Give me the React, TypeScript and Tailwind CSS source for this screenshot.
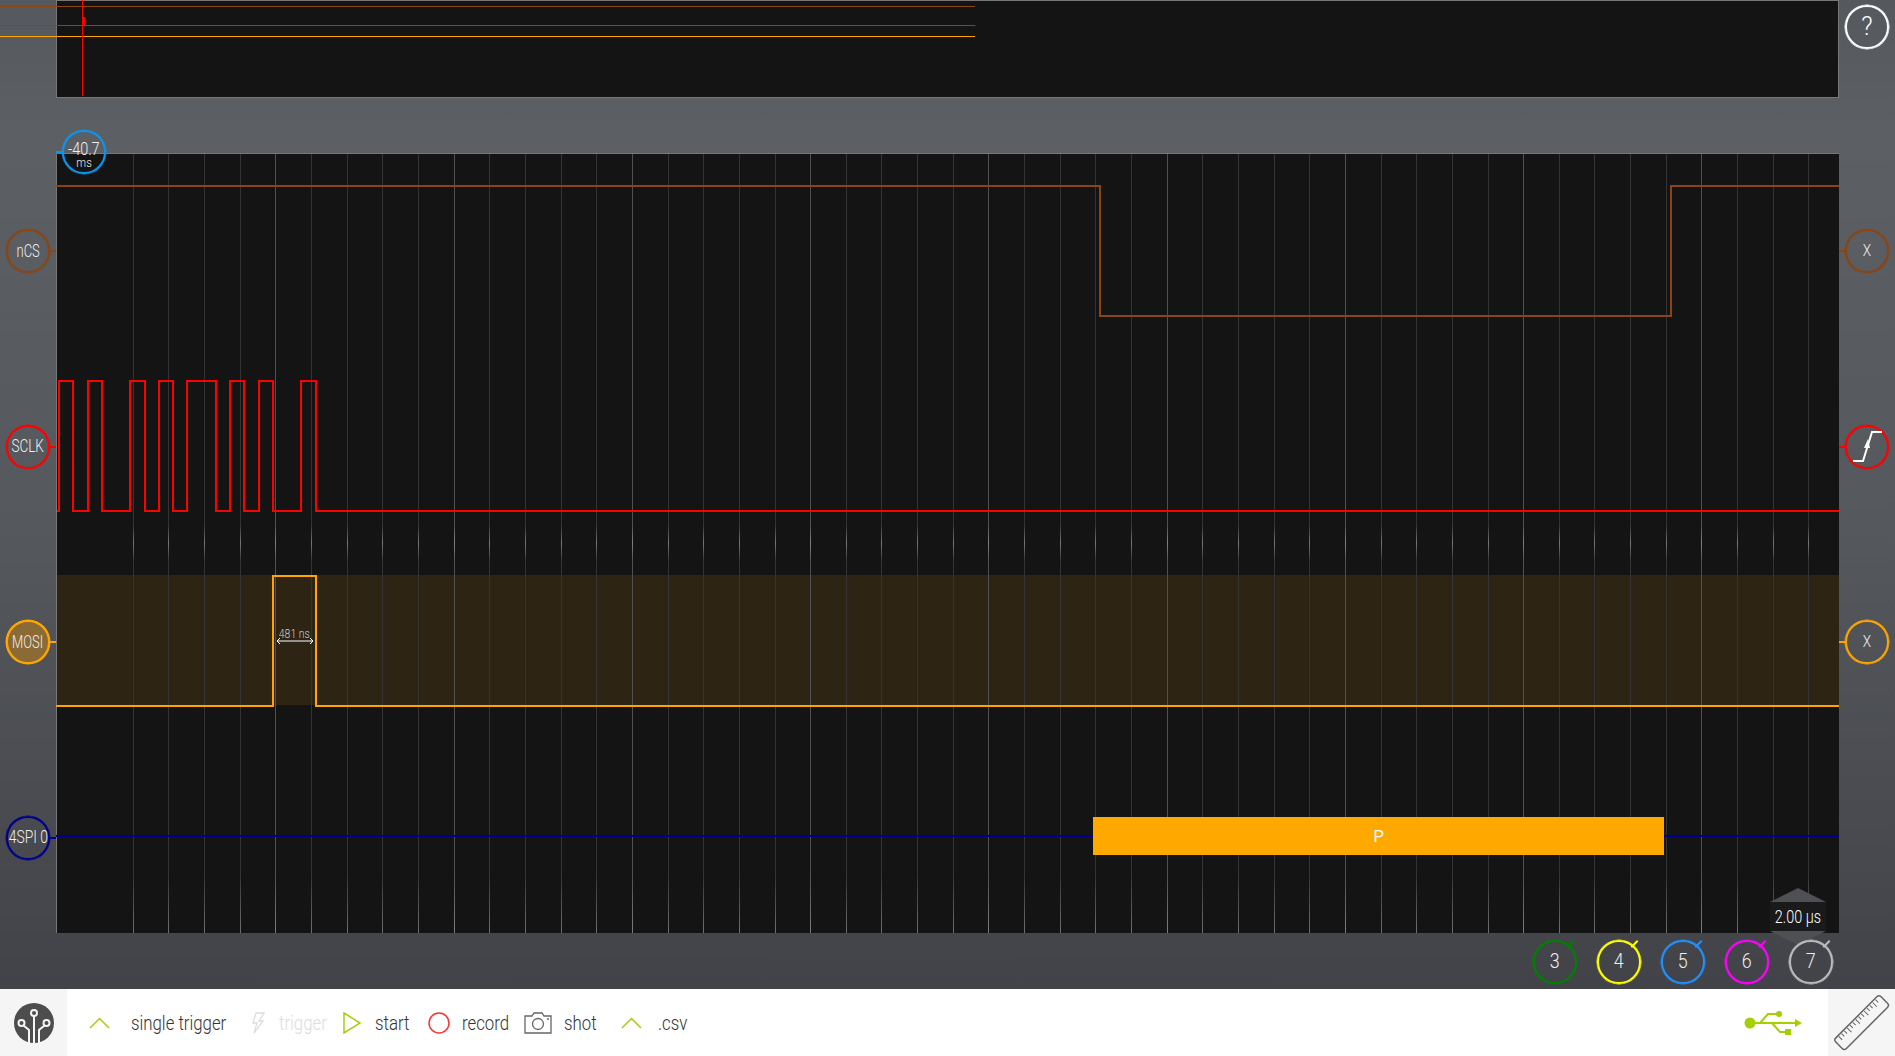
import type { ReactNode } from 'react';

const lines = Array.from({ length: 48 }, (_, i) => 133.3 + i * 35.65);

const channels = [
  { name: 'nCS', border: 'border-[#8b4513] shadow-[0_0_0_0.5px_#8b4513]', tick: 'bg-[#8b4513]', fill: '', right: 'X', scale: 'scale-x-[0.72]' },
  { name: 'SCLK', border: 'border-[#ff0000] shadow-[0_0_0_0.5px_#ff0000]', tick: 'bg-[#ff0000]', fill: '', right: 'edge', scale: 'scale-x-[0.75]' },
  { name: 'MOSI', border: 'border-[#ffa500] shadow-[0_0_0_0.5px_#ffa500]', tick: 'bg-[#ffa500]', fill: 'bg-[#8a6a35]', right: 'X', scale: 'scale-x-[0.72]' },
  { name: '4SPI 0', border: 'border-[#00008b] shadow-[0_0_0_0.5px_#00008b]', tick: 'bg-[#00008b]', fill: '', right: '', scale: 'scale-x-[0.77]' },
];

const channelButtons = [
  ['3', 'border-[#008000] shadow-[0_0_0_0.5px_#008000]', 'bg-[#008000]'],
  ['4', 'border-[#ffff00] shadow-[0_0_0_0.5px_#ffff00]', 'bg-[#ffff00]'],
  ['5', 'border-[#1e90ff] shadow-[0_0_0_0.5px_#1e90ff]', 'bg-[#1e90ff]'],
  ['6', 'border-[#ff00ff] shadow-[0_0_0_0.5px_#ff00ff]', 'bg-[#ff00ff]'],
  ['7', 'border-[#bbbbbb] shadow-[0_0_0_0.5px_#bbbbbb]', 'bg-[#bbbbbb]'],
];

function Waves() {
  return (
    <svg className="absolute inset-0 h-full w-full" viewBox="56 153 1783 780">
      <defs>
        <linearGradient id="midGlow" gradientUnits="userSpaceOnUse" x1="0" x2="0" y1="525" y2="561">
          <stop offset="0" stopColor="#aaa" stopOpacity="0" />
          <stop offset="0.5" stopColor="#aaa" stopOpacity="0.55" />
          <stop offset="1" stopColor="#aaa" stopOpacity="0" />
        </linearGradient>
        <linearGradient id="bottomGlow" gradientUnits="userSpaceOnUse" x1="0" x2="0" y1="875" y2="933">
          <stop offset="0" stopColor="#aaa" stopOpacity="0" />
          <stop offset="1" stopColor="#aaa" stopOpacity="0.5" />
        </linearGradient>
      </defs>
      <g shapeRendering="crispEdges">
        <rect x="56" y="575" width="1783" height="130" fill="#2e2413" />
        <rect x="56" y="153" width="1783" height="1" fill="#777" />
        <rect x="56" y="153" width="1" height="780" fill="#777" />
        {lines.map((x, i) => (
          <g key={x}>
            <line x1={x} x2={x} y1="154" y2="933" stroke={i % 5 === 4 ? '#505050' : '#343434'} strokeWidth="1" />
            <line x1={x} x2={x} y1="525" y2="561" stroke="url(#midGlow)" strokeWidth="1" />
            <line x1={x} x2={x} y1="875" y2="933" stroke="url(#bottomGlow)" strokeWidth="1" />
          </g>
        ))}
        <path d="M56 186H1100V316H1671V186H1839" fill="none" stroke="#8b4513" strokeWidth="2" />
        <path
          d="M57 511H59V381H73V511H88V381H102V511H130V381H145V511H159V381H173V511H187V381H216V511H230V381H244V511H259V381H273V511H301V381H316V511H1839"
          fill="none"
          stroke="#ff0000"
          strokeWidth="2"
        />
        <path d="M56 706H273V576H316V706H1839" fill="none" stroke="#ffa500" strokeWidth="2" />
        <path d="M56 836H1093M1664 836H1839" fill="none" stroke="#00008b" strokeWidth="2" />
      </g>
      <path d="M277 641H313M280 638L277 641L280 644M310 638L313 641L310 644" fill="none" stroke="#fff" strokeWidth="1" />
    </svg>
  );
}

// narrow light lettering used all over the scope UI
function T({ className, scale, children }: { className?: string; scale?: string; children: ReactNode }) {
  return <span className={`inline-block ${scale ?? 'scale-x-[0.85]'} whitespace-nowrap font-light ${className ?? ''}`}>{children}</span>;
}

function Circle({ border, fill, children }: { border: string; fill?: string; children?: ReactNode }) {
  return (
    <div className={`flex h-[44px] w-[44px] shrink-0 items-center justify-center rounded-full border-[2px] ${border} ${fill ?? ''} text-[#eee]`}>
      {children}
    </div>
  );
}

function ChannelRail({ side }: { side: 'left' | 'right' }) {
  return (
    <div className={`flex flex-col ${side === 'left' ? 'pt-[229px]' : 'pt-[224px]'}`}>
      {channels.map((c) => (
        <div key={c.name} className="mb-[151.5px] flex h-[44px] items-center">
          {side === 'right' && c.right !== '' && <div className={`h-[2px] w-[6px] ${c.tick}`} />}
          {side === 'left' && (
            <Circle border={c.border} fill={c.fill}>
              <T className="-mt-[2px] text-[18px]" scale={c.scale}>{c.name}</T>
            </Circle>
          )}
          {side === 'left' && <div className={`h-[2px] w-[6px] ${c.tick}`} />}
          {side === 'right' && c.right === 'X' && (
            <Circle border={c.border}>
              <T className="text-[16px]">X</T>
            </Circle>
          )}
          {side === 'right' && c.right === 'edge' && (
            <Circle border={c.border}>
              <svg width="40" height="40" viewBox="2 2 40 40" className="overflow-visible">
                <path d="M8 36H18L27 7H37" fill="none" stroke="#fff" strokeWidth="2" />
                <path d="M19 23L23 14L25 23Z" fill="#fff" />
              </svg>
            </Circle>
          )}
        </div>
      ))}
    </div>
  );
}

function Chevron({ className }: { className: string }) {
  return (
    <svg width="21" height="12" viewBox="0 0 21 12" className={className}>
      <path d="M1 11L10.5 1.5L20 11" fill="none" stroke="#a4cf10" strokeWidth="1.5" />
    </svg>
  );
}

function ToolLabel({ width, className, children }: { width: string; className: string; children: ReactNode }) {
  return (
    <div className={`${width} ${className} pt-[2px]`}>
      <span className="inline-block origin-left scale-x-[0.8] whitespace-nowrap text-[21px] font-light leading-[24px]">{children}</span>
    </div>
  );
}

export default function App() {
  return (
    <div className="relative flex h-[1056px] w-[1895px] flex-col overflow-hidden bg-[linear-gradient(180deg,#55585c_0%,#5c5f63_12%,#55585c_50%,#3f4045_100%)] font-['Roboto',sans-serif]">
      <div className="flex h-[989px]">
        <div className="w-[56px] shrink-0 pl-[6px]">
          <ChannelRail side="left" />
        </div>
        <div className="flex w-[1783px] shrink-0 flex-col">
          <div className="h-[98px] border border-[#777] bg-[#141414]" />
          <div className="relative mt-[55px] h-[780px] bg-[#141414]">
            <Waves />
            <div className="absolute left-[1037px] top-[664px] flex h-[38px] w-[571px] items-center justify-center bg-[#ffa800] pt-[1px] text-[17px] text-white">P</div>
            <div className="absolute left-[219px] top-[471px] text-[13px] text-[#ccc]">
              <T scale="scale-x-[0.8]">481 ns</T>
            </div>
            <div className="absolute left-[1714px] top-[735px] flex flex-col items-center">
              <div className="h-0 w-0 border-x-[28px] border-b-[14px] border-x-transparent border-b-[#4e5054]" />
              <div className="flex h-[29px] w-[56px] items-center justify-center bg-[#1a1a1a] text-[18px] text-white">
                <T scale="scale-x-[0.8]">2.00 µs</T>
              </div>
              <div className="h-0 w-0 border-x-[28px] border-t-[14px] border-x-transparent border-t-[#4e5054]" />
            </div>
          </div>
          <div className="flex h-[56px] items-center justify-end gap-[20px] pr-[6px] pt-[2px]">
            {channelButtons.map(([n, border, tick]) => (
              <div key={n} className="relative">
                <Circle border={border}>
                  <T className="text-[21px]">{n}</T>
                </Circle>
                <div className={`absolute right-[2px] top-[3px] h-[2px] w-[9px] -rotate-45 ${tick}`} />
              </div>
            ))}
          </div>
        </div>
        <div className="flex w-[56px] shrink-0 flex-col">
          <div className="mt-[5px] h-0">
            <div className="ml-[6px]">
              <Circle border="border-white shadow-[0_0_0_0.5px_#ffffff]">
                <span className="text-[25px] font-light text-white">?</span>
              </Circle>
            </div>
          </div>
          <ChannelRail side="right" />
        </div>
      </div>

      {/* minimap traces run past the frame into the left rail */}
      <svg className="absolute left-0 top-0 h-[97px] w-[1895px]" viewBox="0 0 1895 97" shapeRendering="crispEdges">
        <rect x="0" y="6" width="975" height="1" fill="#8b4513" />
        <rect x="0" y="25" width="975" height="1" fill="#ee1111" />
        <rect x="0" y="36" width="975" height="1" fill="#ffa500" />
        <rect x="82" y="0" width="1" height="96" fill="#ff0000" />
        <rect x="82" y="17" width="3" height="8" fill="#ff0000" />
      </svg>

      <div className="absolute left-[56px] top-[151px] h-[3px] w-[8px] bg-[#0d95ee]" />
      <div className="absolute left-[62px] top-[130px] flex h-[44px] w-[44px] flex-col items-center justify-center rounded-full border-[2px] border-[#0d95ee] pt-[5px] text-[#eee] shadow-[0_0_0_0.5px_#0d95ee]">
        <T className="text-[19px] leading-[16px]" scale="scale-x-[0.76]">-40.7</T>
        <T className="text-[13px] leading-[11px]">ms</T>
      </div>

      <div className="flex h-[67px] items-center bg-white text-[#333]">
        <div className="flex h-full w-[67px] shrink-0 items-center justify-center bg-[#f5f5f5]">
          <svg width="40" height="40" viewBox="0 0 40 40">
            <circle cx="20" cy="20" r="20" fill="#4d4d4d" />
            <g fill="none" stroke="#f5f5f5" strokeWidth="2">
              <path d="M20 40V13" />
              <circle cx="20" cy="10" r="3" />
              <path d="M15 40V27L9.5 22.5" />
              <circle cx="7.5" cy="20" r="3" />
              <path d="M25 40V27L30.5 22.5" />
              <circle cx="32.5" cy="20" r="3" />
            </g>
          </svg>
        </div>
        <div className="flex flex-1 items-center pl-[22px]">
          <Chevron className="w-[21px]" />
          <ToolLabel width="w-[97px]" className="ml-[21px]">single trigger</ToolLabel>
          <svg width="14" height="22" viewBox="0 0 14 22" className="ml-[23px]">
            <path d="M5 1H13L8 9H12L3 21L6 11H2Z" fill="none" stroke="#ddd" strokeWidth="1.3" />
          </svg>
          <ToolLabel width="w-[48px]" className="ml-[14px] text-[#ddd]">trigger</ToolLabel>
          <svg width="18" height="22" viewBox="0 0 18 22" className="ml-[16px]">
            <path d="M1 1L17 11L1 21Z" fill="none" stroke="#a4cf10" strokeWidth="1.5" />
          </svg>
          <ToolLabel width="w-[36px]" className="ml-[14px]">start</ToolLabel>
          <svg width="22" height="22" viewBox="0 0 22 22" className="ml-[17px]">
            <circle cx="11" cy="11" r="10" fill="none" stroke="#ff3030" strokeWidth="1.5" />
          </svg>
          <ToolLabel width="w-[46px]" className="ml-[12px]">record</ToolLabel>
          <svg width="28" height="22" viewBox="0 0 28 22" className="ml-[16px]">
            <path d="M1 4H8L10 1H18L20 4H27V21H1Z" fill="none" stroke="#666" strokeWidth="1.3" />
            <circle cx="14" cy="12" r="5.5" fill="none" stroke="#666" strokeWidth="1.3" />
            <circle cx="24" cy="7" r="1" fill="#666" />
          </svg>
          <ToolLabel width="w-[34px]" className="ml-[12px]">shot</ToolLabel>
          <Chevron className="ml-[23px] w-[21px]" />
          <ToolLabel width="w-[30px]" className="ml-[16px]">.csv</ToolLabel>
        </div>
        <svg width="58" height="28" viewBox="0 0 58 28" className="mr-[26px]">
          <circle cx="6" cy="14" r="5.5" fill="#a4cf00" />
          <path d="M6 14H54M16 14L24 5H34M28 14L36 23H44" fill="none" stroke="#a4cf00" strokeWidth="2" />
          <circle cx="35" cy="5" r="3" fill="#a4cf00" />
          <rect x="41" y="20" width="6" height="6" fill="#a4cf00" />
          <path d="M51 10L58 14L51 18Z" fill="#a4cf00" />
        </svg>
        <div className="flex h-full w-[67px] shrink-0 items-center justify-center bg-[#f5f5f5]">
          <svg width="58" height="58" viewBox="0 0 58 58" className="overflow-visible">
            <g transform="rotate(-45 29 29)">
              <rect x="-3" y="21" width="64" height="15" rx="3" fill="none" stroke="#666" strokeWidth="1.5" />
              <path d="M3 22v5M7 22v4M11 22v4M15 22v6M19 22v4M23 22v4M27 22v6M31 22v4M35 22v4M39 22v6M43 22v4M47 22v4M51 22v6M55 22v4" stroke="#666" strokeWidth="1" />
            </g>
          </svg>
        </div>
      </div>
    </div>
  );
}
